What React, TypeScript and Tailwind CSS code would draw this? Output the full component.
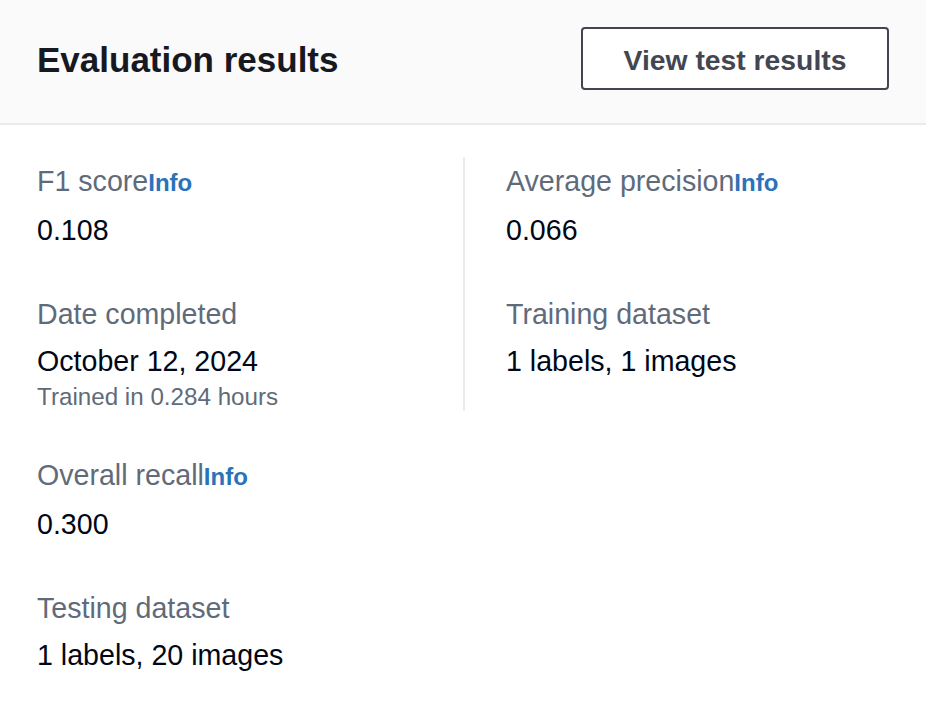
import React from "react";

const font = { fontFamily: '"Liberation Sans", Arial, sans-serif' };

function Label({ text, info }: { text: string; info?: boolean }) {
  return (
    <div className="text-[28.6px] leading-[44px] text-[#5f6b7a]">
      {text}
      {info && <span className="text-[24px] font-bold text-[#2a72b9]">Info</span>}
    </div>
  );
}

function Value({ text }: { text: string }) {
  return <div className="mt-[3px] text-[28.6px] leading-[44px] text-[#000716]">{text}</div>;
}

function Pair({ label, value, info, sub }: { label: string; value: string; info?: boolean; sub?: string }) {
  return (
    <div>
      <Label text={label} info={info} />
      <Value text={value} />
      {sub && <div className="text-[24.2px] leading-[28px] text-[#5f6b7a]">{sub}</div>}
    </div>
  );
}

export default function App() {
  return (
    <div className="w-[926px] h-[710px] bg-white overflow-hidden" style={font}>
      <div className="h-[125px] bg-[#fafafa] border-b-2 border-[#e9ebed] flex items-center justify-between pl-[37px] pr-[37px]">
        <h2 className="text-[35px] font-bold text-[#16191f] leading-[44px] mt-[-4px]">Evaluation results</h2>
        <button className="h-[63px] w-[308px] mt-[-6px] pt-[4px] border-2 border-[#424650] rounded-[4px] bg-white text-[28.3px] font-bold text-[#424650] flex items-center justify-center">
          View test results
        </button>
      </div>
      <div className="pl-[37px] pt-[32px]">
        <div className="grid grid-cols-[426px_1fr]">
          <div className="flex flex-col gap-[40px] pt-[2px]">
            <Pair label="F1 score" value="0.108" info />
            <Pair label="Date completed" value="October 12, 2024" sub="Trained in 0.284 hours" />
          </div>
          <div className="border-l-2 border-[#e9ebed] pl-[41px] pt-[2px] flex flex-col gap-[40px]">
            <Pair label="Average precision" value="0.066" info />
            <Pair label="Training dataset" value="1 labels, 1 images" />
          </div>
        </div>
        <div className="mt-[42px] flex flex-col gap-[40px]">
          <Pair label="Overall recall" value="0.300" info />
          <Pair label="Testing dataset" value="1 labels, 20 images" />
        </div>
      </div>
    </div>
  );
}
